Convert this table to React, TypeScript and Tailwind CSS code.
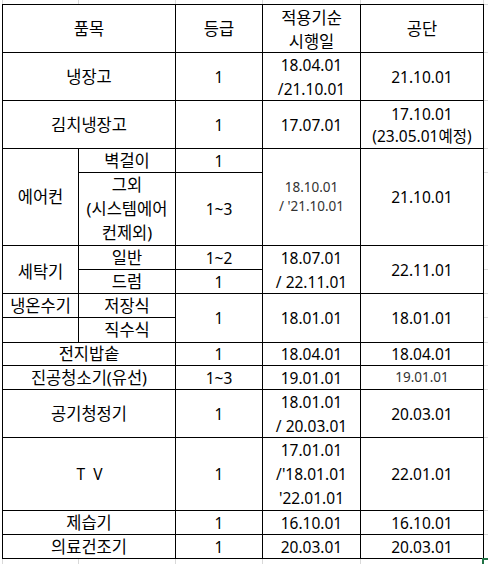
import React from 'react';

// column / row sizes of the sheet (1px black lines between them)
const COLS = 'grid-cols-[75px_96px_86px_97px_122px]';
const ROWS = 'grid-rows-[47px_47px_47px_23px_72px_23px_23px_23px_24px_22px_23px_47px_72px_23px_23px]';

type CellProps = { children?: React.ReactNode; className?: string };

const Cell = ({ children, className = '' }: CellProps) => (
  <div className={`flex flex-col items-center justify-center bg-white text-center ${className}`}>
    {children}
  </div>
);

// hangul labels render a little larger than the digits in the sheet
const K = ({ children }: { children: React.ReactNode }) => (
  <span className="text-[16.5px]">{children}</span>
);

// smaller, lighter text used in a couple of cells
const Small = ({ children }: { children: React.ReactNode }) => (
  <span className="text-[13.5px] leading-[19px] text-[#333]">{children}</span>
);

const App = () => {
  return (
    <div
      className="relative h-[564px] w-[488px] overflow-hidden bg-white text-[15.5px] leading-[24px] text-black"
      style={{ fontFamily: '"Noto Sans", "Noto Sans CJK KR", sans-serif' }}
    >
      {/* faint sheet gridlines above the table */}
      <div className={`ml-[2px] grid h-[4px] w-[482px] ${COLS} gap-px bg-[#d9d9d9] px-px`}>
        <div className="bg-white" />
        <div className="bg-white" />
        <div className="bg-white" />
        <div className="bg-white" />
        <div className="bg-white" />
      </div>

      <div className="flex pl-[2px]">
        {/* the table */}
        <div className={`grid w-[482px] ${COLS} ${ROWS} gap-px bg-black p-px`}>
          {/* header */}
          <Cell className="col-span-2"><K>품목</K></Cell>
          <Cell><K>등급</K></Cell>
          <Cell className="pt-[3px]">
            <K>적용기순</K>
            <K>시행일</K>
          </Cell>
          <Cell><K>공단</K></Cell>

          <Cell className="col-span-2"><K>냉장고</K></Cell>
          <Cell>1</Cell>
          <Cell>
            <span>18.04.01</span>
            <span>/21.10.01</span>
          </Cell>
          <Cell>21.10.01</Cell>

          <Cell className="col-span-2"><K>김치냉장고</K></Cell>
          <Cell>1</Cell>
          <Cell>17.07.01</Cell>
          <Cell className="leading-[22px]">
            <span>17.10.01</span>
            <span>(23.05.01예정)</span>
          </Cell>

          {/* 에어컨 */}
          <Cell className="row-span-2"><K>에어컨</K></Cell>
          <Cell><K>벽걸이</K></Cell>
          <Cell>1</Cell>
          <Cell className="row-span-2">
            <Small>18.10.01</Small>
            <Small>/ '21.10.01</Small>
          </Cell>
          <Cell className="row-span-2">21.10.01</Cell>
          <Cell>
            <K>그외</K>
            <K>(시스템에어</K>
            <K>컨제외)</K>
          </Cell>
          <Cell>1~3</Cell>

          {/* 세탁기 */}
          <Cell className="row-span-2 pt-[5px]"><K>세탁기</K></Cell>
          <Cell><K>일반</K></Cell>
          <Cell>1~2</Cell>
          <Cell className="row-span-2">
            <span>18.07.01</span>
            <span className="whitespace-pre">/ 22.11.01</span>
          </Cell>
          <Cell className="row-span-2">22.11.01</Cell>
          <Cell><K>드럼</K></Cell>
          <Cell>1</Cell>

          {/* 냉온수기 */}
          <Cell><K>냉온수기</K></Cell>
          <Cell><K>저장식</K></Cell>
          <Cell className="row-span-2">1</Cell>
          <Cell className="row-span-2">18.01.01</Cell>
          <Cell className="row-span-2">18.01.01</Cell>
          <Cell />
          <Cell><K>직수식</K></Cell>

          <Cell className="col-span-2"><K>전지밥솥</K></Cell>
          <Cell>1</Cell>
          <Cell>18.04.01</Cell>
          <Cell>18.04.01</Cell>

          <Cell className="col-span-2"><K>진공청소기(유선)</K></Cell>
          <Cell>1~3</Cell>
          <Cell>19.01.01</Cell>
          <Cell>
            <Small>19.01.01</Small>
          </Cell>

          <Cell className="col-span-2"><K>공기청정기</K></Cell>
          <Cell>1</Cell>
          <Cell>
            <span>18.01.01</span>
            <span className="whitespace-pre">/ 20.03.01</span>
          </Cell>
          <Cell>20.03.01</Cell>

          <Cell className="col-span-2 pl-[3px] tracking-[2px]">T V</Cell>
          <Cell>1</Cell>
          <Cell>
            <span>17.01.01</span>
            <span>/'18.01.01</span>
            <span>'22.01.01</span>
          </Cell>
          <Cell>22.01.01</Cell>

          <Cell className="col-span-2"><K>제습기</K></Cell>
          <Cell>1</Cell>
          <Cell>16.10.01</Cell>
          <Cell>16.10.01</Cell>

          <Cell className="col-span-2"><K>의료건조기</K></Cell>
          <Cell>1</Cell>
          <Cell>20.03.01</Cell>
          <Cell>20.03.01</Cell>
        </div>

        {/* faint gridlines right of the table */}
        <div className={`grid w-[4px] ${ROWS} gap-px bg-[#d9d9d9] py-px`}>
          {Array.from({ length: 15 }).map((_, i) => (
            <div key={i} className="bg-white" />
          ))}
        </div>
      </div>

      {/* faint gridlines below the table */}
      <div className={`ml-[2px] grid h-[6px] w-[482px] ${COLS} gap-px bg-[#d9d9d9] px-px`}>
        <div className="bg-white" />
        <div className="bg-white" />
        <div className="bg-white" />
        <div className="bg-white" />
        <div className="bg-white" />
      </div>

      {/* excel fill handle on the selection corner */}
      <div className="absolute left-[482px] top-[558px] h-[6px] w-[6px] border-l-2 border-t-2 border-[#217346]" />
    </div>
  );
};

export default App;
